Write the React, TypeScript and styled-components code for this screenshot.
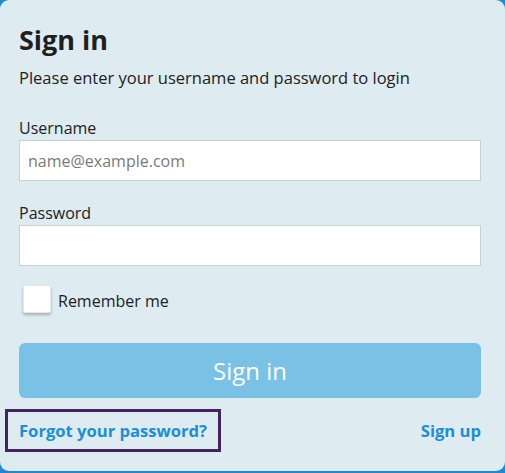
import React from "react";
import styled, { createGlobalStyle } from "styled-components";

const Global = createGlobalStyle`
  html, body { margin: 0; padding: 0; background: #1b8ad3; }
  body { font-family: "Open Sans", "Noto Sans", sans-serif; }
  * { box-sizing: border-box; }
`;

const Card = styled.div`
  width: 505px;
  height: 471px;
  background: #deebf1;
  border-radius: 9px;
  padding: 22px 24px 0 19px;
  display: flex;
  flex-direction: column;
  color: #222;
`;

const Title = styled.h1`
  margin: 0;
  font-size: 27px;
  font-weight: 700;
  line-height: 36px;
  color: #1f1f1f;
`;

const Subtitle = styled.p`
  margin: 9px 0 0;
  font-size: 16.5px;
  line-height: 22px;
`;

const Label = styled.label<{ $top: number }>`
  display: block;
  margin-top: ${(p) => p.$top}px;
  font-size: 16px;
  line-height: 22px;
`;

const Input = styled.input`
  display: block;
  width: 462px;
  height: 41px;
  margin-top: 1px;
  border: 1px solid #c9d0d6;
  background: #fff;
  padding: 0 8px;
  font-family: inherit;
  font-size: 16px;
  color: #222;
  outline: none;
  &::placeholder { color: #7a7a7a; }
`;

const CheckRow = styled.label`
  display: flex;
  align-items: center;
  gap: 7px;
  margin-top: 19px;
  margin-left: 4px;
  font-size: 16px;
  line-height: 22px;
`;

const CheckText = styled.span`
  padding-top: 4px;
`;

const Box = styled.span`
  width: 28px;
  height: 28px;
  background: #fff;
  border: 1px solid #e6e6e6;
  border-radius: 2px;
  box-shadow: 0 2px 3px rgba(0, 0, 0, 0.25);
`;

const Button = styled.button`
  margin-top: 30px;
  width: 462px;
  height: 55px;
  border: none;
  border-radius: 6px;
  background: #79c1e5;
  color: #fff;
  font-family: inherit;
  font-size: 24px;
  font-weight: 400;
`;

const Links = styled.div`
  display: flex;
  justify-content: space-between;
  align-items: center;
  width: 462px;
  margin-top: 11px;
`;

const Link = styled.a<{ $focused?: boolean }>`
  color: #1a8fd6;
  font-weight: 700;
  font-size: 16.6px;
  line-height: 23px;
  text-decoration: none;
  padding: 7px ${(p) => (p.$focused ? "11px" : "0")} 7px;
  margin-left: ${(p) => (p.$focused ? "-14px" : "0")};
  border: ${(p) => (p.$focused ? "3px solid #432460" : "none")};
`;

export default function App() {
  return (
    <>
      <Global />
      <Card>
        <Title>Sign in</Title>
        <Subtitle>Please enter your username and password to login</Subtitle>
        <Label $top={28}>Username</Label>
        <Input placeholder="name@example.com" />
        <Label $top={21}>Password</Label>
        <Input type="password" />
        <CheckRow>
          <Box />
          <CheckText>Remember me</CheckText>
        </CheckRow>
        <Button>Sign in</Button>
        <Links>
          <Link $focused href="#">Forgot your password?</Link>
          <Link href="#">Sign up</Link>
        </Links>
      </Card>
    </>
  );
}
